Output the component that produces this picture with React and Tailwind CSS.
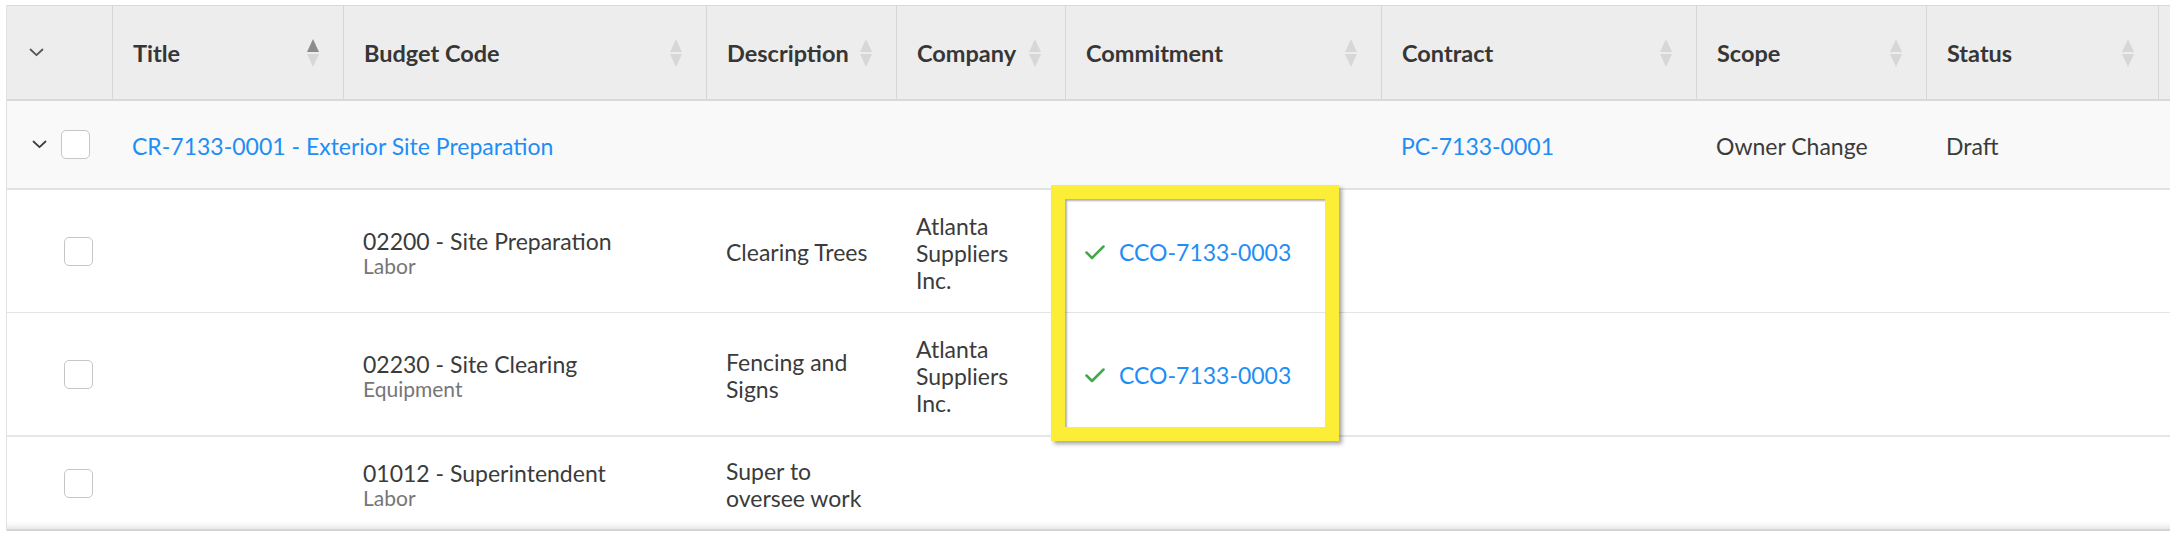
import React from 'react';

// every row shares the same column template so cells line up with the header
const ROW = 'grid grid-cols-[105px_231px_363px_190px_169px_316px_315px_230px_232px_12px]';

const columns = [
  { label: 'Title', sort: 'asc' },
  { label: 'Budget Code' },
  { label: 'Description' },
  { label: 'Company' },
  { label: 'Commitment' },
  { label: 'Contract' },
  { label: 'Scope' },
  { label: 'Status' },
];

const lineItems = [
  {
    code: '02200 - Site Preparation',
    costType: 'Labor',
    description: ['Clearing Trees'],
    company: ['Atlanta', 'Suppliers', 'Inc.'],
    commitment: 'CCO-7133-0003',
    height: 'h-[123px] border-b border-[#e4e4e4]',
  },
  {
    code: '02230 - Site Clearing',
    costType: 'Equipment',
    description: ['Fencing and', 'Signs'],
    company: ['Atlanta', 'Suppliers', 'Inc.'],
    commitment: 'CCO-7133-0003',
    height: 'h-[124px] border-b-2 border-[#e6e6e6]',
  },
  {
    code: '01012 - Superintendent',
    costType: 'Labor',
    description: ['Super to', 'oversee work'],
    company: [],
    commitment: null,
    height: 'h-[94px] border-b-2 border-[#d4d4d4] shadow-[inset_0_-7px_6px_-5px_rgba(0,0,0,0.12)]',
  },
];

function Chevron({ className }) {
  return (
    <svg width="15" height="9" viewBox="0 0 15 9" className={className}>
      <polyline
        points="1.5,1.5 7.5,7.2 13.5,1.5"
        fill="none"
        stroke="currentColor"
        strokeWidth="1.8"
        strokeLinecap="round"
        strokeLinejoin="round"
      />
    </svg>
  );
}

function SortArrows({ active }) {
  return (
    <svg width="12" height="28" viewBox="0 0 12 28" className="shrink-0">
      <polygon points="6,0 12,13 0,13" fill={active ? '#8c8c8c' : '#d7d7d7'} />
      <polygon points="0,15 12,15 6,28" fill="#d7d7d7" />
    </svg>
  );
}

function CheckMark() {
  return (
    <svg width="20" height="15" viewBox="0 0 20 15" className="shrink-0">
      <polyline
        points="1.5,7.5 7,13 18.5,1.5"
        fill="none"
        stroke="#43a947"
        strokeWidth="2.5"
        strokeLinecap="round"
        strokeLinejoin="round"
      />
    </svg>
  );
}

function Checkbox() {
  return <span className="block w-[29px] h-[29px] rounded-[5px] border-[1.5px] border-[#c6c6c6] bg-white" />;
}

export default function App() {
  return (
    <div className="bg-white min-h-screen pt-[5px] pl-[6px] font-['Lato',sans-serif] text-[23px] text-[#3b3b3b]">
      <div className="relative w-[2164px] border-l border-[#e2e2e2]">
        {/* header */}
        <div className={`${ROW} h-[96px] bg-[#ededed] border-t border-b-2 border-[#d9d9d9]`}>
          <div className="flex items-center pl-[22px] text-[#555]">
            <Chevron />
          </div>
          {columns.map((col) => (
            <div
              key={col.label}
              className="flex items-center justify-between gap-2 pl-5 pr-6 border-l border-[#d6d6d6]"
            >
              <span className="pt-[3px] font-bold text-[23.5px] text-[#363636] whitespace-nowrap">{col.label}</span>
              <SortArrows active={col.sort === 'asc'} />
            </div>
          ))}
          <div className="border-l border-[#d6d6d6]" />
        </div>

        {/* change request group */}
        <div className={`${ROW} h-[89px] bg-[#f9f9f9] border-b-2 border-[#e2e2e2]`}>
          <div className="flex items-center gap-[14px] pl-[25px] text-[#3d3d3d]">
            <Chevron />
            <Checkbox />
          </div>
          <div className="col-span-2 flex items-center pl-5 pt-[3px]">
            <a className="text-[#1f8ef4] whitespace-nowrap">CR-7133-0001 - Exterior Site Preparation</a>
          </div>
          <div />
          <div />
          <div />
          <div className="flex items-center pl-5 pt-[3px]">
            <a className="text-[#1f8ef4]">PC-7133-0001</a>
          </div>
          <div className="flex items-center pl-5 pt-[3px]">Owner Change</div>
          <div className="flex items-center pl-5 pt-[3px]">Draft</div>
          <div />
        </div>

        {/* line items */}
        {lineItems.map((item, i) => (
          <div key={i} className={`${ROW} ${item.height} bg-white`}>
            <div className="flex items-center pl-[57px]">
              <Checkbox />
            </div>
            <div />
            <div className="flex flex-col justify-center pl-5 pt-[4px]">
              <span className="leading-[26px]">{item.code}</span>
              <span className="leading-[24px] text-[21px] text-[#767676]">{item.costType}</span>
            </div>
            <div className="flex flex-col justify-center pl-5 pt-[3px] leading-[27px]">
              {item.description.map((d) => (
                <span key={d}>{d}</span>
              ))}
            </div>
            <div className="flex flex-col justify-center pl-5 pt-[4px] leading-[27px]">
              {item.company.map((c) => (
                <span key={c}>{c}</span>
              ))}
            </div>
            <div className="flex items-center gap-[14px] pl-5 pt-[2px]">
              {item.commitment && (
                <>
                  <CheckMark />
                  <a className="text-[#1f8ef4]">{item.commitment}</a>
                </>
              )}
            </div>
            <div />
            <div />
            <div />
            <div />
          </div>
        ))}

        {/* callout around the commitment links */}
        <div className="pointer-events-none absolute left-[1044px] top-[180px] w-[288px] h-[256px] border-[14px] border-[#fcee36] shadow-[3px_3px_4px_rgba(0,0,0,0.35),inset_2px_2px_2px_rgba(0,0,0,0.3)]" />
      </div>
    </div>
  );
}
